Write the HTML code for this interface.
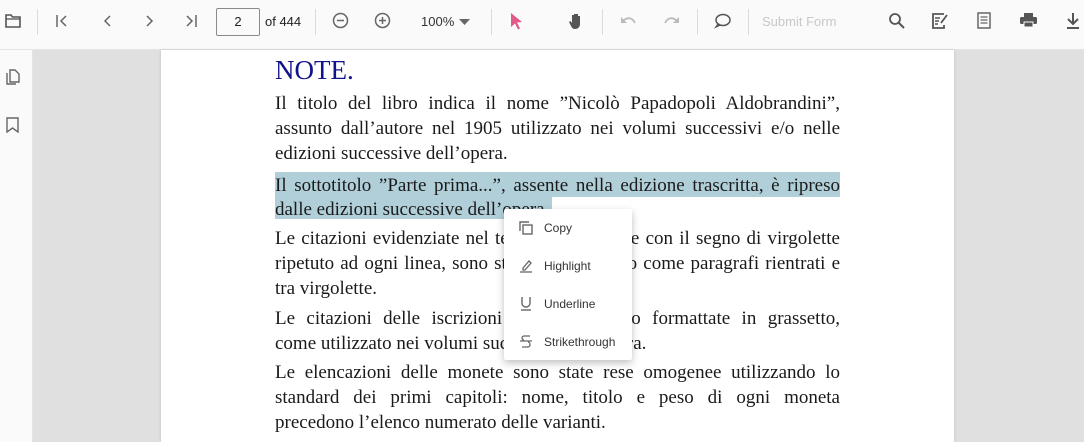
<!DOCTYPE html>
<html><head><meta charset="utf-8"><style>
*{margin:0;padding:0;box-sizing:border-box}
body{width:1084px;height:442px;overflow:hidden;background:#e0e0e0;font-family:"Liberation Sans",sans-serif;position:relative}
.tb{position:absolute;left:0;top:0;width:1084px;height:50px;background:#fafafa;border-bottom:1px solid #e4e4e4}
.side{position:absolute;left:0;top:50px;width:33px;height:392px;background:#fafafa;border-right:1px solid #e4e4e4}
.ic{position:absolute;top:11px}
.sep{position:absolute;top:9px;width:1px;height:26px;background:#dcdcdc}
.page{position:absolute;left:161px;top:50px;width:793px;height:392px;background:#fff;box-shadow:0 0 3px rgba(0,0,0,.15)}
.l{position:absolute;left:275px;width:565px;font-family:"Liberation Serif",serif;font-size:19px;color:#1a1a1a;white-space:nowrap;line-height:22px}
.j{text-align:justify;text-align-last:justify}
.hl{background:#b1cfd9}
.menu{position:absolute;left:504px;top:209px;width:128px;height:151px;background:#fff;box-shadow:0 3px 8px rgba(0,0,0,.25);border-radius:2px}
.mi{position:absolute;left:40px;font-size:12px;color:#333}
.mic{position:absolute;left:15px}
</style></head><body>
<div class="tb">
<svg class="ic" style="left:5px;top:14px" width="16" height="14" viewBox="0 0 16 14"><path d="M1 1h5l1.5 2H15v10H1z" fill="none" stroke="#555" stroke-width="1.6"/><path d="M1 5h14" stroke="#555" stroke-width="1.3"/></svg>
<div class="sep" style="left:37px"></div>
<svg class="ic" style="left:55px;top:14px" width="14" height="14" viewBox="0 0 14 14"><path d="M2 1v12M11 2L6 7l5 5" fill="none" stroke="#666" stroke-width="1.5"/></svg>
<svg class="ic" style="left:101px;top:14px" width="12" height="14" viewBox="0 0 12 14"><path d="M9 2L4 7l5 5" fill="none" stroke="#666" stroke-width="1.5"/></svg>
<svg class="ic" style="left:144px;top:14px" width="12" height="14" viewBox="0 0 12 14"><path d="M3 2l5 5-5 5" fill="none" stroke="#666" stroke-width="1.5"/></svg>
<svg class="ic" style="left:184px;top:14px" width="14" height="14" viewBox="0 0 14 14"><path d="M12 1v12M3 2l5 5-5 5" fill="none" stroke="#666" stroke-width="1.5"/></svg>
<div style="position:absolute;left:216px;top:8px;width:44px;height:28px;border:1px solid #8a8a8a;border-radius:2px;font-size:13px;text-align:center;line-height:26px;color:#222">2</div>
<div style="position:absolute;left:265px;top:14px;font-size:13px;color:#222">of 444</div>
<div class="sep" style="left:315px"></div>
<svg class="ic" style="left:332px;top:12px" width="17" height="17" viewBox="0 0 17 17"><circle cx="8.5" cy="8.5" r="7" fill="none" stroke="#666" stroke-width="1.5"/><path d="M5 8.5h7" stroke="#666" stroke-width="1.5"/></svg>
<svg class="ic" style="left:374px;top:12px" width="17" height="17" viewBox="0 0 17 17"><circle cx="8.5" cy="8.5" r="7" fill="none" stroke="#666" stroke-width="1.5"/><path d="M5 8.5h7M8.5 5v7" stroke="#666" stroke-width="1.5"/></svg>
<div style="position:absolute;left:421px;top:14px;font-size:13px;color:#333">100%</div>
<svg class="ic" style="left:459px;top:19px" width="12" height="7"><path d="M0 0h11L5.5 6z" fill="#666"/></svg>
<div class="sep" style="left:491px"></div>
<svg class="ic" style="left:510px;top:13px" width="13" height="17" viewBox="0 0 13 17"><path d="M1 0l11 9-5 .5 3 6-2 1-3-6L1 14z" fill="#e05a8a"/></svg>
<svg class="ic" style="left:568px;top:12px" width="17" height="18" viewBox="0 0 17 18"><path d="M4 9V3h2v6V2h2v7V2h2v7V4h2v8c0 3-2 5-5 5-2 0-3-1-4-3L1 10l1.5-1L4 11z" fill="#555"/></svg>
<div class="sep" style="left:602px"></div>
<svg class="ic" style="left:620px;top:15px" width="17" height="12" viewBox="0 0 17 12"><path d="M3 6c4-4 9-4 12 2" fill="none" stroke="#bbb" stroke-width="1.8"/><path d="M1 2v6h6z" fill="#bbb"/></svg>
<svg class="ic" style="left:663px;top:15px" width="17" height="12" viewBox="0 0 17 12"><path d="M14 6C10 2 5 2 2 8" fill="none" stroke="#bbb" stroke-width="1.8"/><path d="M16 2v6h-6z" fill="#bbb"/></svg>
<div class="sep" style="left:697px"></div>
<svg class="ic" style="left:714px;top:13px" width="17" height="16" viewBox="0 0 17 16"><ellipse cx="9" cy="7" rx="7" ry="5.5" fill="none" stroke="#555" stroke-width="1.5"/><path d="M4 11l-2 3 4-2" fill="none" stroke="#555" stroke-width="1.4"/></svg>
<div class="sep" style="left:748px"></div>
<div style="position:absolute;left:762px;top:14px;font-size:13px;color:#c8c8c8">Submit Form</div>
<svg class="ic" style="left:888px;top:12px" width="17" height="17" viewBox="0 0 17 17"><circle cx="7" cy="7" r="5" fill="none" stroke="#555" stroke-width="1.8"/><path d="M10.5 10.5L16 16" stroke="#555" stroke-width="2"/></svg>
<svg class="ic" style="left:932px;top:13px" width="17" height="16" viewBox="0 0 17 16"><path d="M12 1H1v14h11v-3" fill="none" stroke="#555" stroke-width="1.8"/><path d="M3 5h5M3 8h4M3 11h3" stroke="#555" stroke-width="1.5"/><path d="M9 10l6-8" stroke="#555" stroke-width="1.8"/></svg>
<svg class="ic" style="left:977px;top:12px" width="14" height="17" viewBox="0 0 14 17"><rect x="1" y="1" width="12" height="15" fill="none" stroke="#666" stroke-width="1.5"/><path d="M3.5 5h7M3.5 8h7M3.5 11h7" stroke="#666" stroke-width="1.2"/></svg>
<svg class="ic" style="left:1020px;top:13px" width="17" height="15" viewBox="0 0 17 15"><rect x="4" y="0" width="9" height="4" fill="#555"/><rect x="0" y="4" width="17" height="7" rx="1.5" fill="#555"/><rect x="4" y="9" width="9" height="5" fill="#555" stroke="#fafafa" stroke-width="1"/></svg>
<svg class="ic" style="left:1066px;top:12px" width="14" height="18" viewBox="0 0 14 18"><path d="M7 1v10M2 7l5 5 5-5" fill="none" stroke="#555" stroke-width="2"/><path d="M1 16h12" stroke="#555" stroke-width="2"/></svg>
</div>
<div class="side">
<svg style="position:absolute;left:6px;top:19px" width="14" height="16" viewBox="0 0 14 16"><path d="M4 1h5l4 4v8H4z" fill="none" stroke="#666" stroke-width="1.4"/><path d="M1 4v11h9" fill="none" stroke="#666" stroke-width="1.4"/></svg>
<svg style="position:absolute;left:6px;top:67px" width="13" height="16" viewBox="0 0 13 16"><path d="M1 1h11v14l-5.5-4L1 15z" fill="none" stroke="#666" stroke-width="1.4"/></svg>
</div>
<div class="page"></div>
<div class="l" style="top:56px;font-size:27px;color:#12128a;line-height:28px">NOTE.</div>
<div class="l j" style="top:93px">Il titolo del libro indica il nome ”Nicolò Papadopoli Aldobrandini”,</div>
<div class="l j" style="top:118px">assunto dall’autore nel 1905 utilizzato nei volumi successivi e/o nelle</div>
<div class="l" style="top:143px">edizioni successive dell’opera.</div>
<div class="hl" style="position:absolute;left:275px;top:172px;width:565px;height:25px"></div>
<div class="hl" style="position:absolute;left:275px;top:197px;width:277px;height:22px"></div>
<div class="l j" style="top:175px">Il sottotitolo ”Parte prima...”, assente nella edizione trascritta, è ripreso</div>
<div class="l" style="top:199px">dalle edizioni successive dell’opera.</div>
<div class="l j" style="top:228px">Le citazioni evidenziate nel testo sono indicate con il segno di virgolette</div>
<div class="l j" style="top:253px">ripetuto ad ogni linea, sono state rese nel testo come paragrafi rientrati e</div>
<div class="l" style="top:278px">tra virgolette.</div>
<div class="l j" style="top:308px">Le citazioni delle iscrizioni o epigrafi sono formattate in grassetto,</div>
<div class="l" style="top:333px">come utilizzato nei volumi successivi dell’opera.</div>
<div class="l j" style="top:362px">Le elencazioni delle monete sono state rese omogenee utilizzando lo</div>
<div class="l j" style="top:387px">standard dei primi capitoli: nome, titolo e peso di ogni moneta</div>
<div class="l" style="top:412px">precedono l’elenco numerato delle varianti.</div>
<div class="menu">
<svg class="mic" style="top:12px" width="14" height="14" viewBox="0 0 14 14"><rect x="4" y="4" width="9" height="9" fill="none" stroke="#666" stroke-width="1.4"/><path d="M1 10V1h9" fill="none" stroke="#666" stroke-width="1.4"/></svg>
<div class="mi" style="top:12px">Copy</div>
<svg class="mic" style="top:50px" width="14" height="14" viewBox="0 0 14 14"><path d="M4 9l6-7 2 2-6 7H4z" fill="none" stroke="#666" stroke-width="1.3"/><path d="M1 13h12" stroke="#666" stroke-width="1.3"/></svg>
<div class="mi" style="top:50px">Highlight</div>
<svg class="mic" style="top:87px" width="14" height="15" viewBox="0 0 14 15"><path d="M3 1v6a4 4 0 008 0V1" fill="none" stroke="#666" stroke-width="1.4"/><path d="M2 14h10" stroke="#666" stroke-width="1.4"/></svg>
<div class="mi" style="top:88px">Underline</div>
<svg class="mic" style="top:125px" width="14" height="14" viewBox="0 0 14 14"><path d="M11 2H5a2 2 0 000 4M1 7h12M9 8a2.5 2.5 0 01-1 5H3" fill="none" stroke="#666" stroke-width="1.3"/></svg>
<div class="mi" style="top:126px">Strikethrough</div>
</div>
</body></html>
